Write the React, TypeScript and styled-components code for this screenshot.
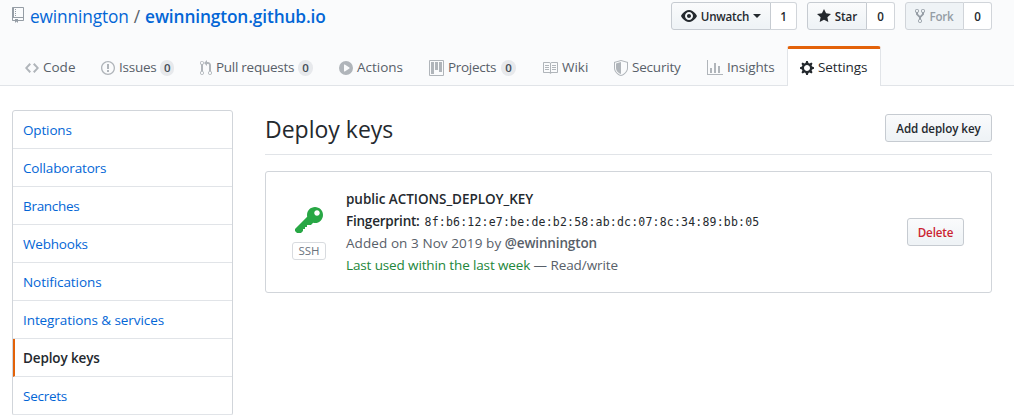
import React from "react";
import styled, { createGlobalStyle, css } from "styled-components";

const GlobalStyle = createGlobalStyle`
  * { box-sizing: border-box; }
  body {
    margin: 0;
    background: #fff;
    color: #24292e;
    font-family: "Open Sans", "Noto Sans", sans-serif;
    font-size: 13.5px;
    line-height: 21px;
  }
  a { color: inherit; text-decoration: none; }
`;

const paths = {
  repo: "M4 9H3V8h1v1zm0-3H3v1h1V6zm0-2H3v1h1V4zm0-2H3v1h1V2zm8-1v12c0 .55-.45 1-1 1H6v2l-1.5-1.5L3 16v-2H1c-.55 0-1-.45-1-1V1c0-.55.45-1 1-1h10c.55 0 1 .45 1 1zm-1 10H1v2h2v-1h3v1h5v-2zm0-10H2v9h9V1z",
  eye: "M8.06 2C3 2 0 8 0 8s3 6 8.06 6C13 14 16 8 16 8s-3-6-7.94-6zM8 12c-2.2 0-4-1.78-4-4 0-2.2 1.8-4 4-4 2.22 0 4 1.8 4 4 0 2.22-1.78 4-4 4zm2-4c0 1.11-.89 2-2 2-1.11 0-2-.89-2-2 0-1.11.89-2 2-2 1.11 0 2 .89 2 2z",
  star: "M14 6l-4.9-.64L7 1 4.9 5.36 0 6l3.6 3.26L2.67 14 7 11.67 11.33 14l-.93-4.74L14 6z",
  fork: "M8 1a1.993 1.993 0 0 0-1 3.72V6L5 8 3 6V4.72A1.993 1.993 0 0 0 2 1a1.993 1.993 0 0 0-1 3.72V6.5l3 3v1.78A1.993 1.993 0 0 0 5 15a1.993 1.993 0 0 0 1-3.72V9.5l3-3V4.72A1.993 1.993 0 0 0 8 1zM2 4.2C1.34 4.2.8 3.65.8 3c0-.65.55-1.2 1.2-1.2.65 0 1.2.55 1.2 1.2 0 .65-.55 1.2-1.2 1.2zm3 10c-.66 0-1.2-.55-1.2-1.2 0-.65.55-1.2 1.2-1.2.65 0 1.2.55 1.2 1.2 0 .65-.55 1.2-1.2 1.2zm3-10c-.66 0-1.2-.55-1.2-1.2 0-.65.55-1.2 1.2-1.2.65 0 1.2.55 1.2 1.2 0 .65-.55 1.2-1.2 1.2z",
  code: "M9.5 3L8 4.5 11.5 8 8 11.5 9.5 13 14 8 9.5 3zm-5 0L0 8l4.5 5L6 11.5 2.5 8 6 4.5 4.5 3z",
  issue: "M7 2.3c3.14 0 5.7 2.56 5.7 5.7s-2.56 5.7-5.7 5.7A5.71 5.71 0 0 1 1.3 8c0-3.14 2.56-5.7 5.7-5.7zM7 1C3.14 1 0 4.14 0 8s3.14 7 7 7 7-3.14 7-7-3.14-7-7-7zm1 3H6v5h2V4zm0 6H6v2h2v-2z",
  pull: "M11 11.28V5c-.03-.78-.34-1.47-.94-2.06C9.46 2.35 8.78 2.03 8 2H7V0L4 3l3 3V4h1c.27.02.48.11.69.31.21.2.3.42.31.69v6.28A1.993 1.993 0 0 0 10 15a1.993 1.993 0 0 0 1-3.72zm-1 2.92c-.66 0-1.2-.55-1.2-1.2 0-.65.55-1.2 1.2-1.2.65 0 1.2.55 1.2 1.2 0 .65-.55 1.2-1.2 1.2zM4 3c0-1.11-.89-2-2-2a1.993 1.993 0 0 0-1 3.72v6.56A1.993 1.993 0 0 0 2 15a1.993 1.993 0 0 0 1-3.72V4.72c.59-.34 1-.98 1-1.72zm-.8 10c0 .66-.55 1.2-1.2 1.2-.65 0-1.2-.55-1.2-1.2 0-.65.55-1.2 1.2-1.2.65 0 1.2.55 1.2 1.2zM2 4.2C1.34 4.2.8 3.65.8 3c0-.65.55-1.2 1.2-1.2.65 0 1.2.55 1.2 1.2 0 .65-.55 1.2-1.2 1.2z",
  play: "M14 8A7 7 0 1 1 0 8a7 7 0 0 1 14 0zm-8.223 3.482l4.599-3.066a.5.5 0 0 0 0-.832L5.777 4.518A.5.5 0 0 0 5 4.934v6.132a.5.5 0 0 0 .777.416z",
  project: "M10 12h3V2h-3v10zm-4-2h3V2H6v8zm-4 4h3V2H2v12zm-1 1h13V1H1v14zM14 0H1a1 1 0 0 0-1 1v14a1 1 0 0 0 1 1h13a1 1 0 0 0 1-1V1a1 1 0 0 0-1-1z",
  book: "M3 5h4v1H3V5zm0 3h4V7H3v1zm0 2h4V9H3v1zm11-5h-4v1h4V5zm0 2h-4v1h4V7zm0 2h-4v1h4V9zm2-6v9c0 .55-.45 1-1 1H9.5l-1 1-1-1H2c-.55 0-1-.45-1-1V3c0-.55.45-1 1-1h5.5l1 1 1-1H15c.55 0 1 .45 1 1zm-8 .5L7.5 3H2v9h6V3.5zm7-.5H9.5l-.5.5V12h6V3z",
  shield: "M0 2l7-2 7 2v6.02C14 12.69 8.69 16 7 16c-1.69 0-7-3.31-7-7.98V2zm1 .75L7 1l6 1.75v5.268C13 12.104 8.449 15 7 15c-1.449 0-6-2.896-6-6.982V2.75zm1 .75L7 2v12c-1.207 0-5-2.482-5-5.985V3.5z",
  graph: "M16 14v1H0V0h1v14h15zM5 13H3V8h2v5zm4 0H7V3h2v10zm4 0h-2V6h2v7z",
  gear: "M14 8.77v-1.6l-1.94-.64-.45-1.09.88-1.84-1.13-1.13-1.81.91-1.09-.45-.69-1.92h-1.6l-.63 1.94-1.11.45-1.84-.88-1.13 1.13.91 1.81-.45 1.09L0 7.23v1.59l1.94.64.45 1.09-.88 1.84 1.13 1.13 1.81-.91 1.09.45.69 1.92h1.59l.63-1.94 1.11-.45 1.84.88 1.13-1.13-.92-1.81.47-1.09L14 8.75v.02zM7 11c-1.66 0-3-1.34-3-3s1.34-3 3-3 3 1.34 3 3-1.34 3-3 3z",
  key: "M12.83 2.17C12.08 1.42 11.14 1.03 10 1c-1.13.03-2.08.42-2.83 1.17S6.04 3.86 6.01 5c0 .3.03.59.09.89L0 12v1l1 1h2l1-1v-1h1v-1h1v-1h2l1.09-1.11c.3.08.59.11.91.11 1.14-.03 2.08-.42 2.83-1.17S13.97 6.14 14 5c-.03-1.14-.42-2.08-1.17-2.83zM11 5.38c-.77 0-1.38-.61-1.38-1.38 0-.77.61-1.38 1.38-1.38.77 0 1.38.61 1.38 1.38 0 .77-.61 1.38-1.38 1.38z",
};
type IconName = keyof typeof paths;

const Svg = styled.svg`
  display: block;
  flex: none;
  fill: currentColor;
`;

const Icon = ({ name, w, scale = 1 }: { name: IconName; w: number; scale?: number }) => (
  <Svg width={w * scale} height={16 * scale} viewBox={`0 0 ${w} 16`} fillRule="evenodd">
    <path d={paths[name]} />
  </Svg>
);

/* Tracking keeps each label at its intended width. */
const Label = styled.span<{ $track?: number }>`
  white-space: nowrap;
  letter-spacing: ${(p) => p.$track ?? 0}px;
`;

const Page = styled.div`
  width: 1014px;
  height: 415px;
  overflow: hidden;
`;

const Header = styled.header`
  display: flex;
  flex-direction: column;
  height: 86px;
  padding: 0 22px 0 12px;
  background: #fafbfc;
  border-bottom: 1px solid #e1e4e8;
`;

const TitleRow = styled.div`
  display: flex;
  flex: none;
  justify-content: space-between;
  height: 46px;
`;

const RepoTitle = styled.h1`
  display: flex;
  align-items: center;
  height: 32px;
  margin: 0;
  font-size: 17.3px;
  font-weight: 400;
  color: #0366d6;
  svg { margin: -2px 6px 0 0; color: #959da5; }
  b { font-weight: 600; }
`;

const Slash = styled.span`
  margin: 0 5px;
  color: #586069;
`;

const Actions = styled.div`
  display: flex;
  gap: 10px;
  padding-top: 2px;
`;

const buttonFace = css`
  display: flex;
  align-items: center;
  justify-content: center;
  height: 28px;
  color: #24292e;
  font-size: 11.6px;
  font-weight: 600;
  border: 1px solid #c6cbd1;
  background: linear-gradient(#fafbfc, #eff3f6 90%);
`;

const SplitButton = styled.div<{ $w: number; $disabled?: boolean }>`
  ${buttonFace}
  width: ${(p) => p.$w}px;
  gap: 4px;
  border-radius: 3px 0 0 3px;
  ${(p) => p.$disabled && css`color: #959da5; background: #eff3f6; border-color: #d0d4d9;`}
`;

const Count = styled.div<{ $w: number }>`
  display: flex;
  align-items: center;
  justify-content: center;
  width: ${(p) => p.$w}px;
  height: 28px;
  font-size: 11.6px;
  font-weight: 600;
  background: #fff;
  border: 1px solid #d1d5da;
  border-left: 0;
  border-radius: 0 3px 3px 0;
`;

const Group = styled.div`
  display: flex;
`;

const Caret = styled.span`
  border: 4px solid transparent;
  border-top-color: currentColor;
  border-bottom: 0;
`;

const Tabs = styled.nav`
  display: flex;
  flex: none;
  height: 40px;
`;

const Tab = styled.a<{ $w: number; $active?: boolean }>`
  display: flex;
  align-items: center;
  gap: 4px;
  flex: none;
  width: ${(p) => p.$w}px;
  height: 40px;
  padding: 0 12px;
  color: #586069;
  border: 1px solid transparent;
  border-top-width: 3px;
  border-bottom: 0;
  svg { color: #b0b5ba; margin-top: 1px; }
  ${(p) =>
    p.$active &&
    css`
      color: #24292e;
      background: #fff;
      border-color: #e36209 #e1e4e8 transparent;
      border-radius: 3px 3px 0 0;
      svg { color: #24292e; }
    `}
`;

const Counter = styled.span`
  display: flex;
  align-items: center;
  justify-content: center;
  width: 15px;
  height: 16px;
  margin-left: auto;
  color: #444d56;
  font-size: 11.5px;
  font-weight: 600;
  line-height: 16px;
  background: #e7e9ec;
  border-radius: 8px;
`;

const Main = styled.main`
  display: flex;
  gap: 32px;
  padding: 24px 22px 0 12px;
`;

const Menu = styled.nav`
  flex: none;
  width: 221px;
  border: 1px solid #d1d5da;
  border-radius: 3px;
`;

const MenuItem = styled.a<{ $active?: boolean }>`
  display: flex;
  align-items: center;
  height: 38px;
  padding: 1px 10px 0;
  color: #0366d6;
  border-bottom: 1px solid #e1e4e8;
  ${(p) =>
    p.$active &&
    css`
      padding-left: 8px;
      color: #24292e;
      font-weight: 600;
      border-left: 2px solid #e36209;
    `}
`;

const Content = styled.section`
  flex: 1;
`;

const Subhead = styled.div`
  display: flex;
  justify-content: space-between;
  height: 45px;
  padding-top: 4px;
  border-bottom: 1px solid #e1e4e8;
  h2 {
    margin: 0;
    font-size: 23px;
    font-weight: 400;
    line-height: 31px;
  }
`;

const Button = styled.button<{ $w: number; $danger?: boolean }>`
  ${buttonFace}
  width: ${(p) => p.$w}px;
  padding: 0;
  font-family: inherit;
  border-radius: 3px;
  ${(p) => p.$danger && css`color: #cb2431;`}
`;

const Card = styled.article`
  display: flex;
  align-items: center;
  height: 122px;
  margin-top: 16px;
  padding: 0 27px 0 26px;
  border: 1px solid #d1d5da;
  border-radius: 3px;
`;

const KeyBadge = styled.div`
  display: flex;
  flex-direction: column;
  align-items: center;
  width: 34px;
  margin-right: 20px;
  color: #28a745;
`;

const KeyType = styled.span`
  width: 34px;
  height: 18px;
  margin-top: 5px;
  color: #6a737d;
  font-size: 11.5px;
  line-height: 16px;
  text-align: center;
  border: 1px solid #d8dbdf;
  border-radius: 3px;
`;

const Details = styled.div`
  flex: 1;
  line-height: 22px;
  b { font-weight: 600; }
`;

const Line = styled.div<{ $muted?: boolean }>`
  height: 22px;
  white-space: nowrap;
  color: ${(p) => (p.$muted ? "#586069" : "#24292e")};
`;

const Fingerprint = styled.code`
  margin-left: 5px;
  font-family: "DejaVu Sans Mono", monospace;
  font-size: 11.5px;
  letter-spacing: 0.2px;
`;

const Fresh = styled(Label)`
  color: #22863a;
`;

interface TabData {
  name: string;
  icon: IconName;
  iw: number;
  w: number;
  track: number;
  count?: number;
  active?: boolean;
}

const tabs: TabData[] = [
  { name: "Code", icon: "code", iw: 14, w: 76, track: 0 },
  { name: "Issues", icon: "issue", iw: 14, w: 99, track: -0.25, count: 0 },
  { name: "Pull requests", icon: "pull", iw: 12, w: 139, track: -0.27, count: 0 },
  { name: "Actions", icon: "play", iw: 14, w: 90, track: 0 },
  { name: "Projects", icon: "project", iw: 15, w: 113, track: -0.3, count: 0 },
  { name: "Wiki", icon: "book", iw: 16, w: 72, track: 0 },
  { name: "Security", icon: "shield", iw: 14, w: 93, track: -0.2 },
  { name: "Insights", icon: "graph", iw: 16, w: 93, track: -0.15 },
  { name: "Settings", icon: "gear", iw: 14, w: 94, track: -0.1, active: true },
];

const menu: { name: string; track: number; active?: boolean }[] = [
  { name: "Options", track: -0.15 },
  { name: "Collaborators", track: -0.15 },
  { name: "Branches", track: -0.3 },
  { name: "Webhooks", track: -0.2 },
  { name: "Notifications", track: -0.07 },
  { name: "Integrations & services", track: -0.08 },
  { name: "Deploy keys", track: -0.12, active: true },
  { name: "Secrets", track: -0.25 },
];

export default function App() {
  return (
    <Page>
      <GlobalStyle />
      <Header>
        <TitleRow>
          <RepoTitle>
            <Icon name="repo" w={12} />
            <Label $track={-0.13}>ewinnington</Label>
            <Slash>/</Slash>
            <b><Label $track={-0.13}>ewinnington.github.io</Label></b>
          </RepoTitle>
          <Actions>
            <Group>
              <SplitButton $w={100}>
                <Icon name="eye" w={16} />
                <Label $track={-0.2}>Unwatch</Label>
                <Caret />
              </SplitButton>
              <Count $w={26}>1</Count>
            </Group>
            <Group>
              <SplitButton $w={60}>
                <Icon name="star" w={14} />
                <Label $track={-0.1}>Star</Label>
              </SplitButton>
              <Count $w={28}>0</Count>
            </Group>
            <Group>
              <SplitButton $w={59} $disabled>
                <Icon name="fork" w={10} />
                <Label $track={-0.2}>Fork</Label>
              </SplitButton>
              <Count $w={28}>0</Count>
            </Group>
          </Actions>
        </TitleRow>
        <Tabs>
          {tabs.map((t) => (
            <Tab key={t.name} $w={t.w} $active={t.active}>
              <Icon name={t.icon} w={t.iw} />
              <Label $track={t.track}>{t.name}</Label>
              {t.count !== undefined && <Counter>{t.count}</Counter>}
            </Tab>
          ))}
        </Tabs>
      </Header>
      <Main>
        <Menu>
          {menu.map((m) => (
            <MenuItem key={m.name} $active={m.active}>
              <Label $track={m.track}>{m.name}</Label>
            </MenuItem>
          ))}
        </Menu>
        <Content>
          <Subhead>
            <h2><Label $track={0}>Deploy keys</Label></h2>
            <Button $w={107}><Label $track={-0.06}>Add deploy key</Label></Button>
          </Subhead>
          <Card>
            <KeyBadge>
              <Icon name="key" w={14} scale={2} />
              <KeyType>SSH</KeyType>
            </KeyBadge>
            <Details>
              <Line><b><Label $track={-0.04}>public ACTIONS_DEPLOY_KEY</Label></b></Line>
              <Line>
                <b><Label $track={-0.22}>Fingerprint:</Label></b>
                <Fingerprint>8f:b6:12:e7:be:de:b2:58:ab:dc:07:8c:34:89:bb:05</Fingerprint>
              </Line>
              <Line $muted>
                <Label $track={0.08}>Added on 3 Nov 2019 by </Label>
                <b><Label $track={-0.14}>@ewinnington</Label></b>
              </Line>
              <Line $muted>
                <Fresh $track={-0.13}>Last used within the last week</Fresh>
                <Label $track={-0.08}> — Read/write</Label>
              </Line>
            </Details>
            <Button $w={57} $danger><Label $track={-0.15}>Delete</Label></Button>
          </Card>
        </Content>
      </Main>
    </Page>
  );
}
